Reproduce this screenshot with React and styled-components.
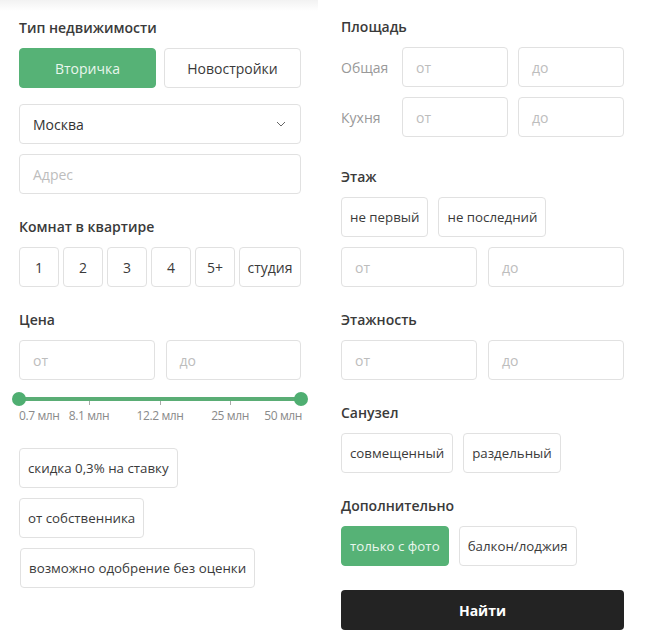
import React from "react";
import styled, { createGlobalStyle } from "styled-components";

const Global = createGlobalStyle`
  html, body { margin: 0; padding: 0; background: #fff; }
  body { font-family: "Open Sans", "Noto Sans", sans-serif; color: #333; }
  * { box-sizing: border-box; }
`;

const Page = styled.div`
  display: grid;
  grid-template-columns: 318px 283px;
  width: 655px;
  min-height: 644px;
`;

const LeftPanel = styled.div`
  padding: 18px 17px 0 19px;
  background: linear-gradient(#f2f2f2 0px, #fff 11px);
`;

const RightPanel = styled.div`
  padding: 17px 0 0 23px;
  grid-column: 2;
  width: 306px;
`;

const Title = styled.div`
  font-size: 14px;
  font-weight: 600;
  color: #3a3a3a;
  line-height: 20px;
  height: 20px;
  margin-top: ${(p) => p.$mt || 0}px;
  margin-bottom: 10px;
`;

const Row = styled.div`
  display: flex;
  gap: ${(p) => p.$gap ?? 8}px;
  margin-top: ${(p) => p.$mt || 0}px;
  align-items: center;
`;

const Toggle = styled.div`
  height: 40px;
  flex: ${(p) => (p.$grow ? "1 1 0" : "0 0 auto")};
  width: ${(p) => (p.$w ? p.$w + "px" : "auto")};
  padding: 0 ${(p) => (p.$px ?? 8)}px;
  display: flex;
  align-items: center;
  justify-content: center;
  border-radius: 4px;
  font-size: ${(p) => (p.$grow || p.$w ? 14 : 13.3)}px;
  white-space: nowrap;
  background: ${(p) => (p.$active ? "#56b276" : "#fff")};
  color: ${(p) => (p.$active ? "#e9f6ed" : "#3a3a3a")};
  border: 1px solid ${(p) => (p.$active ? "#56b276" : "#e1e1e1")};
`;

const Field = styled.div`
  height: 40px;
  flex: 1 1 0;
  border: 1px solid #e1e1e1;
  border-radius: 4px;
  display: flex;
  align-items: center;
  justify-content: space-between;
  padding: 0 13px;
  font-size: 14px;
  color: ${(p) => (p.$value ? "#333" : "#bdbdbd")};
  margin-top: ${(p) => p.$mt || 0}px;
`;

const SideLabel = styled.div`
  width: 51px;
  flex: 0 0 51px;
  font-size: 14px;
  color: #999;
`;

const Slider = styled.div`
  position: relative;
  height: 40px;
  margin-top: 12px;
`;

const Track = styled.div`
  position: absolute;
  left: 0;
  right: 0;
  top: 5px;
  height: 4px;
  background: #5aad75;
  border-radius: 2px;
`;

const Knob = styled.div`
  position: absolute;
  top: 0;
  width: 14px;
  height: 14px;
  border-radius: 50%;
  background: #4fae71;
  left: ${(p) => (p.$end ? "calc(100% - 7px)" : "-7px")};
`;

const Tick = styled.div`
  position: absolute;
  top: 9px;
  width: 1px;
  height: 4px;
  background: #aaa;
`;

const ScaleLabel = styled.div`
  position: absolute;
  top: 16px;
  font-size: 12px;
  letter-spacing: -0.4px;
  color: #8a8a8a;
  white-space: nowrap;
  line-height: 16px;
`;

const Chips = styled.div`
  display: flex;
  flex-direction: column;
  align-items: flex-start;
  gap: 10px;
  margin-top: 16px;
`;

const SearchButton = styled.button`
  width: 283px;
  height: 40px;
  margin-top: 24px;
  background: #232323;
  color: #fff;
  border: none;
  border-radius: 4px;
  font-family: inherit;
  font-size: 14px;
  font-weight: 700;
`;

const Chevron = () => (
  <svg width="10" height="6" viewBox="0 0 10 6" fill="none">
    <path d="M1 1l4 4 4-4" stroke="#666" strokeWidth="1" />
  </svg>
);

const ticks = [
  { x: 70, label: "8.1 млн" },
  { x: 141, label: "12.2 млн" },
  { x: 211, label: "25 млн" },
];

export default function App() {
  return (
    <>
      <Global />
      <Page>
        <LeftPanel>
          <Title>Тип недвижимости</Title>
          <Row>
            <Toggle $grow $active>Вторичка</Toggle>
            <Toggle $grow>Новостройки</Toggle>
          </Row>
          <Field $value $mt={16} style={{ paddingRight: 14 }}>
            Москва
            <Chevron />
          </Field>
          <Field $mt={10}>Адрес</Field>

          <Title $mt={23}>Комнат в квартире</Title>
          <Row $gap={4}>
            {["1", "2", "3", "4", "5+"].map((n) => (
              <Toggle key={n} $w={40} $px={0}>{n}</Toggle>
            ))}
            <Toggle $grow $px={0}>студия</Toggle>
          </Row>

          <Title $mt={23}>Цена</Title>
          <Row $gap={11}>
            <Field>от</Field>
            <Field>до</Field>
          </Row>
          <Slider>
            <Track />
            {ticks.map((t) => (
              <Tick key={t.x} style={{ left: t.x }} />
            ))}
            <Knob />
            <Knob $end />
            <ScaleLabel style={{ left: 0 }}>0.7 млн</ScaleLabel>
            {ticks.map((t) => (
              <ScaleLabel key={t.label} style={{ left: t.x, transform: "translateX(-50%)" }}>
                {t.label}
              </ScaleLabel>
            ))}
            <ScaleLabel style={{ right: -1 }}>50 млн</ScaleLabel>
          </Slider>

          <Chips>
            <Toggle>скидка 0,3% на ставку</Toggle>
            <Toggle>от собственника</Toggle>
            <Toggle style={{ marginLeft: 1 }}>возможно одобрение без оценки</Toggle>
          </Chips>
        </LeftPanel>

        <RightPanel>
          <Title>Площадь</Title>
          <Row $gap={10}>
            <SideLabel>Общая</SideLabel>
            <Field>от</Field>
            <Field>до</Field>
          </Row>
          <Row $gap={10} $mt={10}>
            <SideLabel>Кухня</SideLabel>
            <Field>от</Field>
            <Field>до</Field>
          </Row>

          <Title $mt={30}>Этаж</Title>
          <Row $gap={10}>
            <Toggle>не первый</Toggle>
            <Toggle>не последний</Toggle>
          </Row>
          <Row $gap={11} $mt={10}>
            <Field>от</Field>
            <Field>до</Field>
          </Row>

          <Title $mt={23}>Этажность</Title>
          <Row $gap={11}>
            <Field>от</Field>
            <Field>до</Field>
          </Row>

          <Title $mt={23}>Санузел</Title>
          <Row $gap={10}>
            <Toggle>совмещенный</Toggle>
            <Toggle>раздельный</Toggle>
          </Row>

          <Title $mt={23}>Дополнительно</Title>
          <Row $gap={10}>
            <Toggle $active>только с фото</Toggle>
            <Toggle>балкон/лоджия</Toggle>
          </Row>
          <SearchButton>Найти</SearchButton>
        </RightPanel>
      </Page>
    </>
  );
}
